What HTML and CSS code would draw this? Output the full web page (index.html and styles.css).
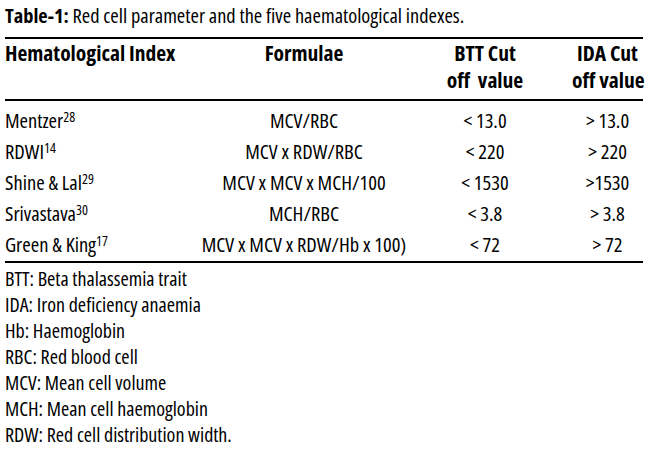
FILE: index.html
```html
<!DOCTYPE html>
<html lang="en">
<head>
<meta charset="utf-8">
<title>Table-1</title>
<link rel="stylesheet" href="styles.css">
</head>
<body>
<div class="page">
  <p class="caption"><b>Table-1:</b> Red cell parameter and the five haematological indexes.</p>
  <table class="idx">
    <thead>
      <tr>
        <th class="c1">Hematological Index</th>
        <th class="c2">Formulae</th>
        <th class="c3">BTT Cut<br>off&nbsp; value</th>
        <th class="c4">IDA Cut<br>off value</th>
      </tr>
    </thead>
    <tbody>
      <tr><td class="c1">Mentzer<sup>28</sup></td><td class="c2">MCV/RBC</td><td class="c3">&lt; 13.0</td><td class="c4">&gt; 13.0</td></tr>
      <tr><td class="c1">RDWI<sup>14</sup></td><td class="c2">MCV x RDW/RBC</td><td class="c3">&lt; 220</td><td class="c4">&gt; 220</td></tr>
      <tr><td class="c1">Shine &amp; Lal<sup>29</sup></td><td class="c2">MCV x MCV x MCH/100</td><td class="c3">&lt; 1530</td><td class="c4">&gt;1530</td></tr>
      <tr><td class="c1">Srivastava<sup>30</sup></td><td class="c2">MCH/RBC</td><td class="c3">&lt; 3.8</td><td class="c4">&gt; 3.8</td></tr>
      <tr><td class="c1">Green &amp; King<sup>17</sup></td><td class="c2">MCV x MCV x RDW/Hb x 100)</td><td class="c3">&lt; 72</td><td class="c4">&gt; 72</td></tr>
    </tbody>
  </table>
  <ul class="notes">
    <li>BTT: Beta thalassemia trait</li>
    <li>IDA: Iron deficiency anaemia</li>
    <li>Hb: Haemoglobin</li>
    <li>RBC: Red blood cell</li>
    <li>MCV: Mean cell volume</li>
    <li>MCH: Mean cell haemoglobin</li>
    <li>RDW: Red cell distribution width.</li>
  </ul>
</div>
</body>
</html>
```

FILE: styles.css
```css
html, body {
  margin: 0;
  padding: 0;
  background: #fff;
}
body {
  font-family: "Open Sans", sans-serif;
  font-stretch: 75%;
  color: #000;
}
.page {
  width: 638px;
  padding: 0 7px 0 5px;
}
.caption {
  margin: 0;
  padding-top: 4px;
  height: 33px;
  font-size: 20.4px;
  line-height: 22px;
  white-space: nowrap;
}
.caption b {
  font-weight: bold;
}
.idx {
  width: 638px;
  border-collapse: collapse;
  table-layout: fixed;
  border-top: 2px solid #000;
  border-bottom: 2px solid #000;
}
.idx th, .idx td {
  padding: 0;
  white-space: nowrap;
}
.idx .c1 { width: 185px; text-align: left; }
.idx .c2 { width: 228px; text-align: center; }
.idx .c3 { width: 134px; text-align: center; }
.idx .c4 { width: 71px; padding-left: 20px; text-align: center; }
.idx thead th {
  font-size: 21.5px;
  font-weight: bold;
  line-height: 27px;
  vertical-align: top;
  padding-top: 0;
  padding-bottom: 6px;
  border-bottom: 2px solid #000;
}
.idx tbody td {
  font-size: 20.5px;
  line-height: 31px;
  vertical-align: middle;
}
.idx tbody tr:first-child td { padding-top: 4px; }
.idx tbody tr:last-child td { padding-bottom: 1px; }
.idx sup {
  font-size: 14px;
  line-height: 0;
  vertical-align: 6px;
}
.notes {
  list-style: none;
  margin: 3px 0 0;
  padding: 0;
  font-size: 20px;
  line-height: 26px;
}
```
